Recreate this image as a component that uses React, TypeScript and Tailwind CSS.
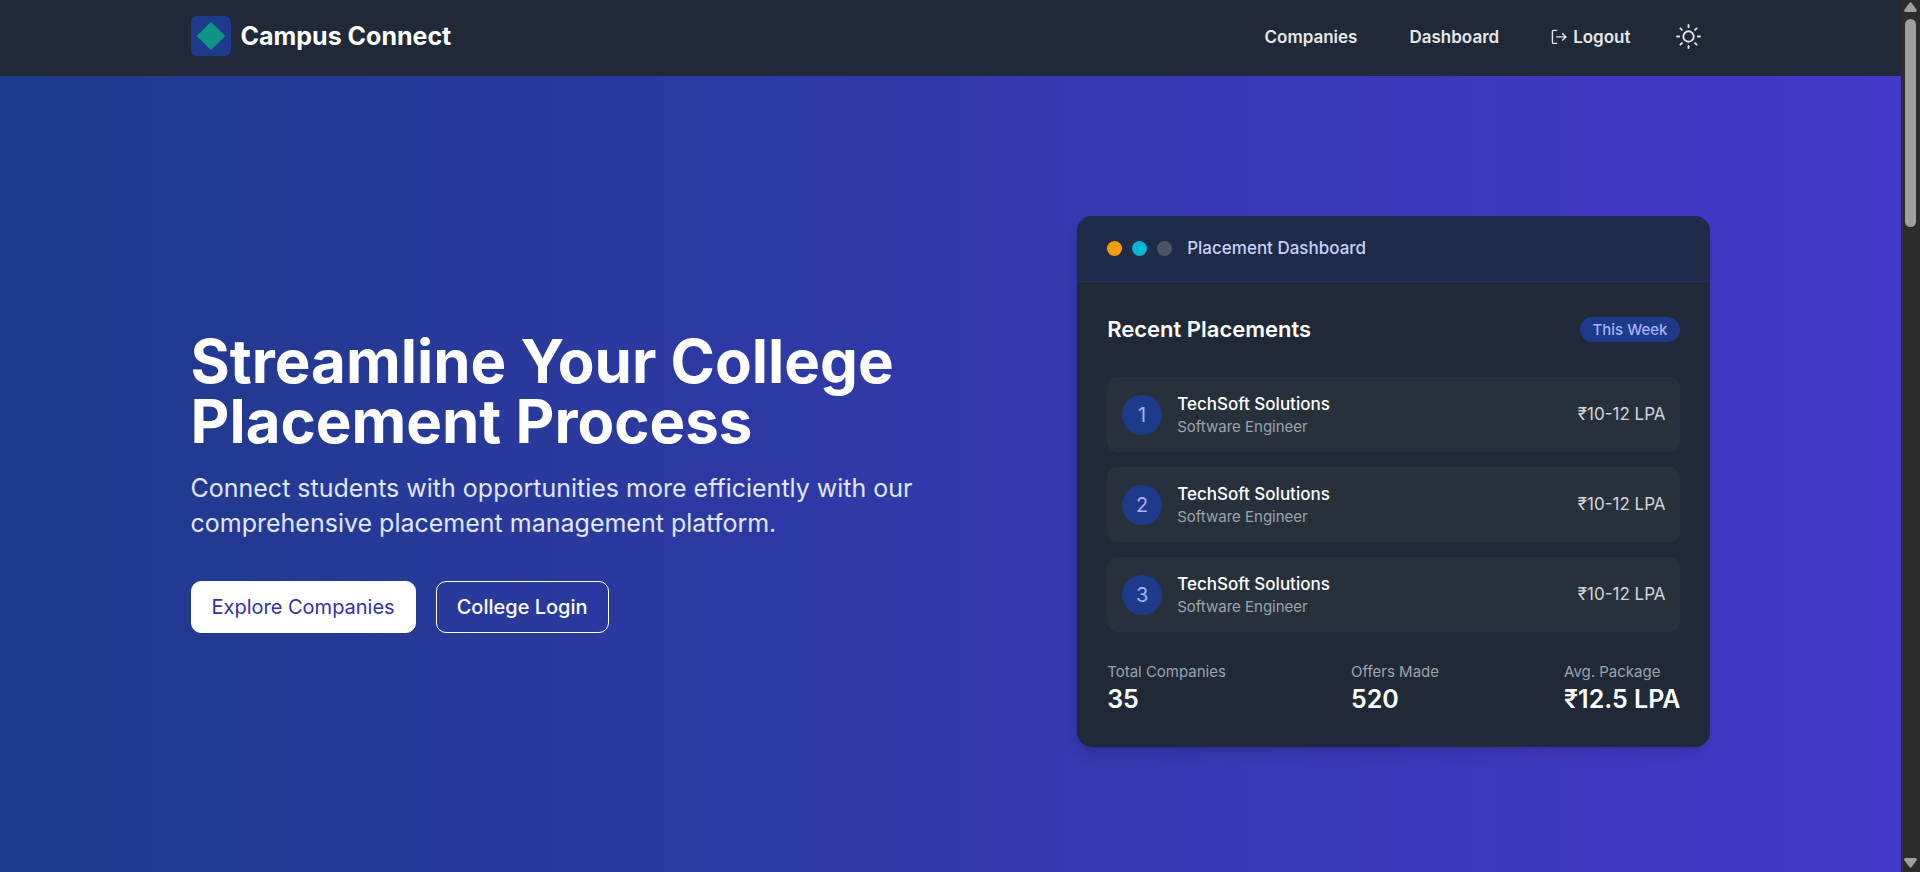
const placements = [1, 2, 3].map((rank) => ({
  rank,
  company: "TechSoft Solutions",
  role: "Software Engineer",
  pay: "₹10-12 LPA",
}));

const stats = [
  { label: "Total Companies", value: "35" },
  { label: "Offers Made", value: "520" },
  { label: "Avg. Package", value: "₹12.5 LPA" },
];

function LogoutIcon() {
  return (
    <svg viewBox="0 0 16 16" fill="none" stroke="currentColor" strokeWidth="1.4" aria-hidden="true" className="size-4">
      <path d="M6.2 1.4H2.6a1.2 1.2 0 0 0-1.2 1.2v10.6a1.2 1.2 0 0 0 1.2 1.2h3.6" />
      <path d="M5.2 7.9h9.6M11.2 4.3l3.7 3.6-3.7 3.6" />
    </svg>
  );
}

function SunIcon() {
  return (
    <svg
      viewBox="0 0 24 24"
      fill="none"
      stroke="currentColor"
      strokeWidth="1.8"
      strokeLinecap="round"
      aria-hidden="true"
      className="size-[25px]"
    >
      <circle cx="12" cy="12" r="5" />
      <path d="M12 1v2M12 21v2M1 12h2M21 12h2M4.2 4.2l1.5 1.5M18.3 18.3l1.5 1.5M4.2 19.8l1.5-1.5M18.3 5.7l1.5-1.5" />
    </svg>
  );
}

function Header() {
  return (
    <header className="bg-[#1f2937] pt-4 pb-5">
      <div className="mx-auto flex w-full max-w-[1520px] items-center justify-between">
        <a href="#" className="flex items-center gap-[10px]">
          <span className="flex size-10 items-center justify-center rounded-md bg-[#1e3a8a]">
            <span className="size-5 rotate-45 bg-[#0d9488]" />
          </span>
          <span className="text-[25px] leading-8 font-bold text-white">Campus Connect</span>
        </a>
        <nav className="flex items-center gap-[52px] pt-px pr-[10px] text-[17px] leading-7 font-semibold text-[#e5e7eb]">
          <a href="#companies">Companies</a>
          <a href="#dashboard">Dashboard</a>
          <div className="flex items-center gap-[45px]">
            <button type="button" className="flex items-center gap-[6px]">
              <LogoutIcon />
              Logout
            </button>
            <button type="button" aria-label="Toggle theme">
              <SunIcon />
            </button>
          </div>
        </nav>
      </div>
    </header>
  );
}

function Intro() {
  return (
    <div className="w-7/12">
      <h1 className="text-[60px] leading-[60px] font-bold text-white">
        Streamline Your College
        <br />
        Placement Process
      </h1>
      <p className="mt-5 max-w-[760px] text-[25px] leading-[35px] text-[#e0e7ff]">
        Connect students with opportunities more efficiently with our comprehensive placement management platform.
      </p>
      <div className="mt-10 flex gap-5 text-[20px] leading-[30px]">
        <a href="#companies" className="rounded-[10px] border border-white bg-white px-5 py-[10px] text-[#3730a3]">
          Explore Companies
        </a>
        <a href="#login" className="rounded-[10px] border border-white px-5 py-[10px] font-medium text-white">
          College Login
        </a>
      </div>
    </div>
  );
}

function DashboardCard() {
  return (
    <section className="w-5/12 overflow-hidden rounded-[15px] bg-[#1f2937] shadow-lg">
      <div className="flex items-center gap-[10px] border-b border-[#1e3a8a]/40 bg-[#1e3a8a]/20 px-[30px] py-5">
        <span className="size-[15px] rounded-full bg-[#f59e0b]" />
        <span className="size-[15px] rounded-full bg-[#06b6d4]" />
        <span className="size-[15px] rounded-full bg-[#4b5563]" />
        <span className="ml-[5px] text-[17px] leading-[25px] font-medium text-[#c7d2fe]">Placement Dashboard</span>
      </div>
      <div className="p-[30px]">
        <div className="flex items-center justify-between">
          <h2 className="text-[22px] leading-[35px] font-semibold text-white">Recent Placements</h2>
          <span className="rounded-full bg-[#1e3a8a] px-[13px] text-[15px] leading-[25px] font-medium text-[#a5b4fc]">
            This Week
          </span>
        </div>
        <ul className="mt-[30px] space-y-[15px]">
          {placements.map((item) => (
            <li key={item.rank} className="flex items-center rounded-[10px] bg-[#27313c] p-[15px]">
              <span className="flex size-10 items-center justify-center rounded-full bg-[#1e3a8a] text-[20px] text-[#a5b4fc]">
                {item.rank}
              </span>
              <div className="ml-[15px]">
                <p className="text-[17px] leading-[25px] font-medium text-white">{item.company}</p>
                <p className="text-[15px] leading-5 text-[#9ca3af]">{item.role}</p>
              </div>
              <span className="ml-auto text-[17px] text-[#d1d5db]">{item.pay}</span>
            </li>
          ))}
        </ul>
        <dl className="mt-[30px] flex justify-between">
          {stats.map((stat) => (
            <div key={stat.label}>
              <dt className="text-[15px] leading-5 text-[#9ca3af]">{stat.label}</dt>
              <dd className="text-[25px] leading-[35px] font-semibold text-white">{stat.value}</dd>
            </div>
          ))}
        </dl>
      </div>
    </section>
  );
}

function ScrollRail() {
  return (
    <div aria-hidden="true" className="flex w-[19px] shrink-0 flex-col items-center bg-[#2c2c2c] pt-[2px] pb-1">
      <svg viewBox="0 0 13 10" className="h-[10px] w-[13px] fill-[#9f9f9f]">
        <path d="M5.3 1 Q6.5-.6 7.7 1 L12.6 7.8 Q13.2 10 11.5 10 H1.5 Q-.2 10 .4 7.8Z" />
      </svg>
      <div className="mt-[7px] h-[208px] w-[11px] rounded-full bg-[#9f9f9f]" />
      <svg viewBox="0 0 13 10" className="mt-auto h-[10px] w-[13px] rotate-180 fill-[#9f9f9f]">
        <path d="M5.3 1 Q6.5-.6 7.7 1 L12.6 7.8 Q13.2 10 11.5 10 H1.5 Q-.2 10 .4 7.8Z" />
      </svg>
    </div>
  );
}

export default function App() {
  return (
    <div className="flex min-h-screen font-['Inter',sans-serif]">
      <div className="flex min-w-0 flex-1 flex-col">
        <Header />
        <main className="flex flex-1 items-center bg-linear-to-r/srgb from-[#1e3a8a] to-[#4338ca] pt-[140px] pb-[125px]">
          <div className="mx-auto flex w-full max-w-[1520px] items-center">
            <Intro />
            <DashboardCard />
          </div>
        </main>
      </div>
      <ScrollRail />
    </div>
  );
}
